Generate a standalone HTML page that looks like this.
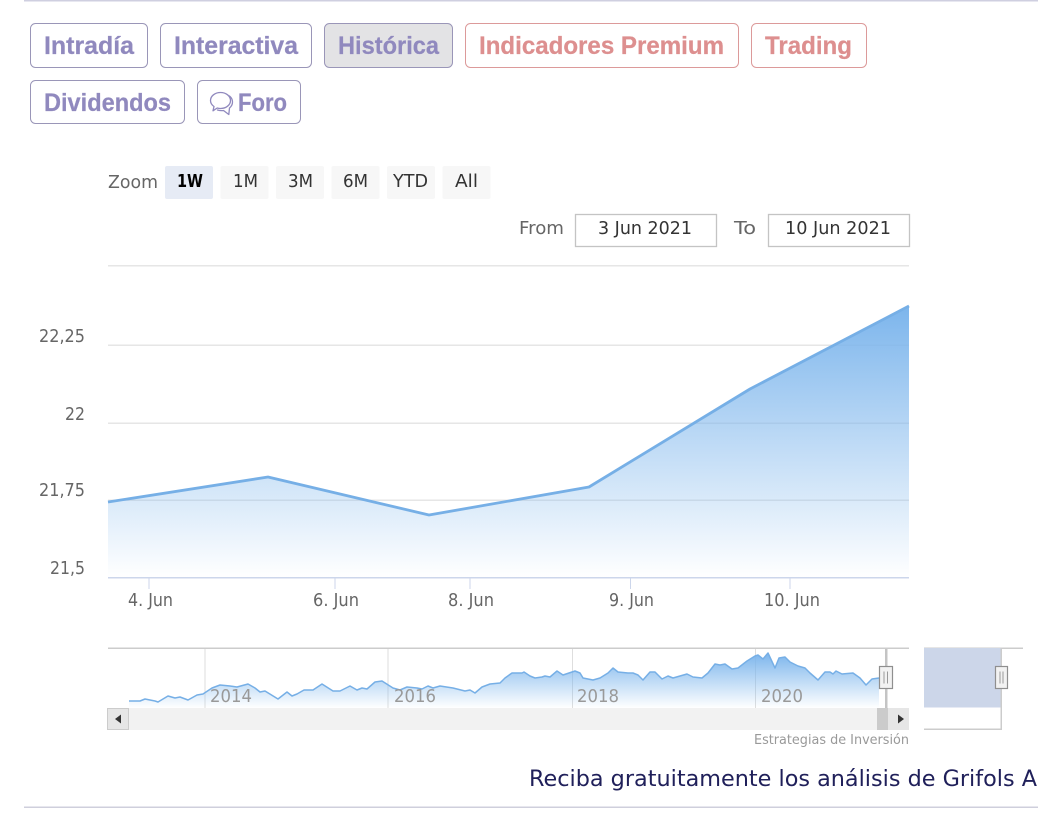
<!DOCTYPE html>
<html lang="es">
<head>
<meta charset="utf-8">
<title>Grifols A</title>
<style>
html,body{margin:0;padding:0;background:#fff;width:1055px;height:826px;overflow:hidden}
svg{display:block}
.b{font-family:"Liberation Sans","DejaVu Sans",sans-serif;font-weight:700;font-size:25px;stroke-width:.25px}
.p{fill:#9089be;stroke:#9089be}
.r{fill:#dd8f8f;stroke:#dd8f8f}
.c{font-family:"DejaVu Sans","Liberation Sans",sans-serif;font-size:17.5px}
.g{fill:#666}
.k{fill:#333}
</style>
</head>
<body>
<svg width="1055" height="826" viewBox="0 0 1055 826" xmlns="http://www.w3.org/2000/svg">
<defs>
<linearGradient id="m" x1="0" y1="306" x2="0" y2="578" gradientUnits="userSpaceOnUse">
<stop offset="0" stop-color="#7cb5ec"/><stop offset="1" stop-color="#7cb5ec" stop-opacity="0"/>
</linearGradient>
<linearGradient id="n" x1="0" y1="653" x2="0" y2="708" gradientUnits="userSpaceOnUse">
<stop offset="0" stop-color="#7cb5ec"/><stop offset="1" stop-color="#7cb5ec" stop-opacity="0"/>
</linearGradient>
</defs>

<rect x="24" y="0" width="1014" height="1.5" fill="#cfcfe0"/>

<!-- tabs -->
<g fill="#fff" stroke="#9a96b8" stroke-width="1">
<rect x="30.5" y="23.5" width="117" height="44" rx="5"/>
<rect x="160.5" y="23.5" width="151" height="44" rx="5"/>
<rect x="324.5" y="23.5" width="128" height="44" rx="5" fill="#e3e3e5"/>
<rect x="30.5" y="80.5" width="154" height="43" rx="5"/>
<rect x="197.5" y="80.5" width="103" height="43" rx="5"/>
</g>
<g fill="#fff" stroke="#dc9a9a" stroke-width="1">
<rect x="465.5" y="23.5" width="273" height="44" rx="5"/>
<rect x="751.5" y="23.5" width="115" height="44" rx="5"/>
</g>
<g class="b">
<text class="p" x="44" y="54" textLength="90" lengthAdjust="spacingAndGlyphs">Intradía</text>
<text class="p" x="174" y="54" textLength="124" lengthAdjust="spacingAndGlyphs">Interactiva</text>
<text class="p" x="338" y="54" textLength="101" lengthAdjust="spacingAndGlyphs">Histórica</text>
<text class="r" x="479" y="54" textLength="245" lengthAdjust="spacingAndGlyphs">Indicadores Premium</text>
<text class="r" x="765" y="54" textLength="87" lengthAdjust="spacingAndGlyphs">Trading</text>
<text class="p" x="44" y="111" textLength="127" lengthAdjust="spacingAndGlyphs">Dividendos</text>
<text class="p" x="238" y="111" textLength="49" lengthAdjust="spacingAndGlyphs">Foro</text>
</g>
<!-- forum icon -->
<g fill="none" stroke="#9089be" stroke-width="1.300" stroke-linejoin="round" stroke-linecap="round">
<path d="M214 106.500C211.500 104.800 210.500 102.600 210.500 100.500C210.500 96 215 92.500 220.500 92.500C226 92.500 230.500 96 230.500 100.500C230.500 105 226 108.500 220.500 108.500C219.300 108.500 218.200 108.300 217.200 108L213 110.800Z"/>
<path d="M229.500 96C231.300 97.500 232.500 99.500 232.500 102C232.500 104.500 231.300 106.500 229.500 108L228.800 114.500L223.500 110.500C221.500 110.800 219.500 110.600 217.500 110"/>
</g>

<!-- range selector -->
<g class="c">
<text class="g" x="108" y="188" textLength="50" lengthAdjust="spacingAndGlyphs">Zoom</text>
</g>
<g>
<rect x="165" y="166" width="48" height="33" rx="2" fill="#e6ebf5"/>
<rect x="220.500" y="166" width="48" height="33" rx="2" fill="#f7f7f7"/>
<rect x="276" y="166" width="48" height="33" rx="2" fill="#f7f7f7"/>
<rect x="331.500" y="166" width="48" height="33" rx="2" fill="#f7f7f7"/>
<rect x="387" y="166" width="48" height="33" rx="2" fill="#f7f7f7"/>
<rect x="442.500" y="166" width="48" height="33" rx="2" fill="#f7f7f7"/>
</g>
<g class="c k">
<text x="177" y="187" textLength="26" lengthAdjust="spacingAndGlyphs" font-weight="700" fill="#000">1W</text>
<text x="233" y="187" textLength="25" lengthAdjust="spacingAndGlyphs">1M</text>
<text x="288" y="187" textLength="25" lengthAdjust="spacingAndGlyphs">3M</text>
<text x="343" y="187" textLength="25" lengthAdjust="spacingAndGlyphs">6M</text>
<text x="393" y="187" textLength="35" lengthAdjust="spacingAndGlyphs">YTD</text>
<text x="455" y="187" textLength="23" lengthAdjust="spacingAndGlyphs">All</text>
</g>

<!-- date inputs -->
<g class="c g">
<text x="519" y="234" textLength="45" lengthAdjust="spacingAndGlyphs">From</text>
<text x="734" y="234" textLength="22" lengthAdjust="spacingAndGlyphs">To</text>
</g>
<rect x="575.500" y="214.500" width="141" height="32" fill="#fff" stroke="#c4c4c4" stroke-width="1.300"/>
<rect x="768.500" y="214.500" width="141" height="32" fill="#fff" stroke="#c4c4c4" stroke-width="1.300"/>
<g class="c k">
<text x="598" y="234" textLength="94" lengthAdjust="spacingAndGlyphs">3 Jun 2021</text>
<text x="785" y="234" textLength="106" lengthAdjust="spacingAndGlyphs">10 Jun 2021</text>
</g>

<!-- main chart -->
<g fill="#e6e6e6">
<rect x="108" y="265" width="801" height="1.500"/>
<rect x="108" y="344.500" width="801" height="1.500"/>
<rect x="108" y="422.500" width="801" height="1.500"/>
<rect x="108" y="499.500" width="801" height="1.500"/>
</g>
<path d="M108 502L268 477L429 515L589 487L750 389L909 306V578H108Z" fill="url(#m)"/>
<path d="M108 502L268 477L429 515L589 487L750 389L909 306" fill="none" stroke="#76afe6" stroke-width="2.800" stroke-linejoin="round"/>
<rect x="108" y="577" width="801" height="1.500" fill="#ccd6eb"/>
<g fill="#ccd6eb">
<rect x="148.500" y="578" width="1" height="11"/>
<rect x="334.500" y="578" width="1" height="11"/>
<rect x="469.500" y="578" width="1" height="11"/>
<rect x="630" y="578" width="1" height="11"/>
<rect x="789.500" y="578" width="1" height="11"/>
</g>
<g class="c g">
<text x="39" y="342" textLength="46" lengthAdjust="spacingAndGlyphs">22,25</text>
<text x="65" y="420" textLength="20" lengthAdjust="spacingAndGlyphs">22</text>
<text x="39" y="496" textLength="46" lengthAdjust="spacingAndGlyphs">21,75</text>
<text x="50" y="574" textLength="35" lengthAdjust="spacingAndGlyphs">21,5</text>
<text x="128" y="606" textLength="45" lengthAdjust="spacingAndGlyphs">4. Jun</text>
<text x="313" y="606" textLength="46" lengthAdjust="spacingAndGlyphs">6. Jun</text>
<text x="448" y="606" textLength="46" lengthAdjust="spacingAndGlyphs">8. Jun</text>
<text x="609" y="606" textLength="45" lengthAdjust="spacingAndGlyphs">9. Jun</text>
<text x="764" y="606" textLength="56" lengthAdjust="spacingAndGlyphs">10. Jun</text>
</g>

<!-- navigator -->
<rect x="108" y="647.500" width="801" height="1.500" fill="#ccc"/>
<g fill="#dedede">
<rect x="204.500" y="649" width="1" height="59"/>
<rect x="387.500" y="649" width="1" height="59"/>
<rect x="572" y="649" width="1" height="59"/>
<rect x="755" y="649" width="1" height="59"/>
</g>
<path d="M129 701L140 701L145 699L155 701L158 702L168 696L175 698L180 697L188 700L197 695L203 694L212 688L220 685L230 686L237 687L248 684L255 688L260 692L265 691L278 699L287 692L292 696L297 694L304 690L313 690L322 684L333 691L340 691L350 686L357 690L362 688L367 689L375 682L382 681L393 688L400 690L407 687L417 688L422 689L428 686L433 688L440 686L453 688L465 691L470 690L475 693L482 687L490 684L500 683L505 678L512 673L522 673L524 672L530 676L535 678L542 677L545 676L550 677L557 671L563 675L575 671L580 673L583 678L593 680L600 678L608 673L613 668L618 672L628 673L633 673L638 675L643 680L650 672L655 672L662 679L668 676L673 678L687 674L693 677L702 678L708 673L715 664L720 665L725 664L732 669L738 668L747 661L755 656L758 655L763 659L768 653L775 668L779 658L785 657L790 662L798 666L805 668L810 673L818 680L825 672L830 672L833 674L836 671L842 674L853 673L860 678L866 685L872 679L879 678V708H129Z" fill="url(#n)"/>
<path d="M129 701L140 701L145 699L155 701L158 702L168 696L175 698L180 697L188 700L197 695L203 694L212 688L220 685L230 686L237 687L248 684L255 688L260 692L265 691L278 699L287 692L292 696L297 694L304 690L313 690L322 684L333 691L340 691L350 686L357 690L362 688L367 689L375 682L382 681L393 688L400 690L407 687L417 688L422 689L428 686L433 688L440 686L453 688L465 691L470 690L475 693L482 687L490 684L500 683L505 678L512 673L522 673L524 672L530 676L535 678L542 677L545 676L550 677L557 671L563 675L575 671L580 673L583 678L593 680L600 678L608 673L613 668L618 672L628 673L633 673L638 675L643 680L650 672L655 672L662 679L668 676L673 678L687 674L693 677L702 678L708 673L715 664L720 665L725 664L732 669L738 668L747 661L755 656L758 655L763 659L768 653L775 668L779 658L785 657L790 662L798 666L805 668L810 673L818 680L825 672L830 672L833 674L836 671L842 674L853 673L860 678L866 685L872 679L879 678" fill="none" stroke="#76afe6" stroke-width="1.500" stroke-linejoin="round"/>
<g class="c" fill="#999">
<text x="210" y="702" textLength="42" lengthAdjust="spacingAndGlyphs">2014</text>
<text x="394" y="702" textLength="42" lengthAdjust="spacingAndGlyphs">2016</text>
<text x="577" y="702" textLength="42" lengthAdjust="spacingAndGlyphs">2018</text>
<text x="761" y="702" textLength="42" lengthAdjust="spacingAndGlyphs">2020</text>
</g>

<!-- scrollbar -->
<rect x="107" y="708" width="802" height="22" fill="#f2f2f2"/>
<rect x="107.500" y="708.500" width="21" height="21" fill="#e6e6e6" stroke="#ccc"/>
<path d="M121 714.500V723.500L115 719Z" fill="#333"/>
<rect x="877" y="708" width="11" height="22" fill="#cbcbcb"/>
<rect x="888" y="708" width="21" height="22" fill="#e6e6e6"/>
<path d="M898 714.500V723.500L904 719Z" fill="#333"/>
<rect x="885" y="649" width="2.500" height="59" fill="#c4c4c4"/>
<rect x="879.500" y="666.500" width="13" height="22" fill="#f2f2f2" stroke="#8f8f8f" stroke-width="1.200"/>
<path d="M884 671.500V683.500M887.500 671.500V683.500" stroke="#999" stroke-width="1"/>

<!-- stray right fragment -->
<rect x="924" y="647.500" width="99" height="1.500" fill="#ccc"/>
<rect x="924" y="648" width="77" height="59.500" fill="#ccd6e9"/>
<rect x="1000.500" y="648" width="1.500" height="81" fill="#ccc"/>
<rect x="924" y="728.500" width="78" height="1.500" fill="#ccc"/>
<rect x="995.500" y="666.500" width="12" height="22" fill="#f2f2f2" stroke="#8f8f8f" stroke-width="1.200"/>
<path d="M1000 671.500V683.500M1003 671.500V683.500" stroke="#999" stroke-width="1"/>

<text x="754" y="744" font-family="'DejaVu Sans','Liberation Sans',sans-serif" font-size="13.500" fill="#999" textLength="155" lengthAdjust="spacingAndGlyphs">Estrategias de Inversión</text>

<text x="529" y="786" font-family="'DejaVu Sans','Liberation Sans',sans-serif" font-size="22.500" fill="#20205a" textLength="508" lengthAdjust="spacingAndGlyphs">Reciba gratuitamente los análisis de Grifols A</text>
<rect x="24" y="806.500" width="1014" height="1.500" fill="#cfcfdc"/>
</svg>
</body>
</html>
